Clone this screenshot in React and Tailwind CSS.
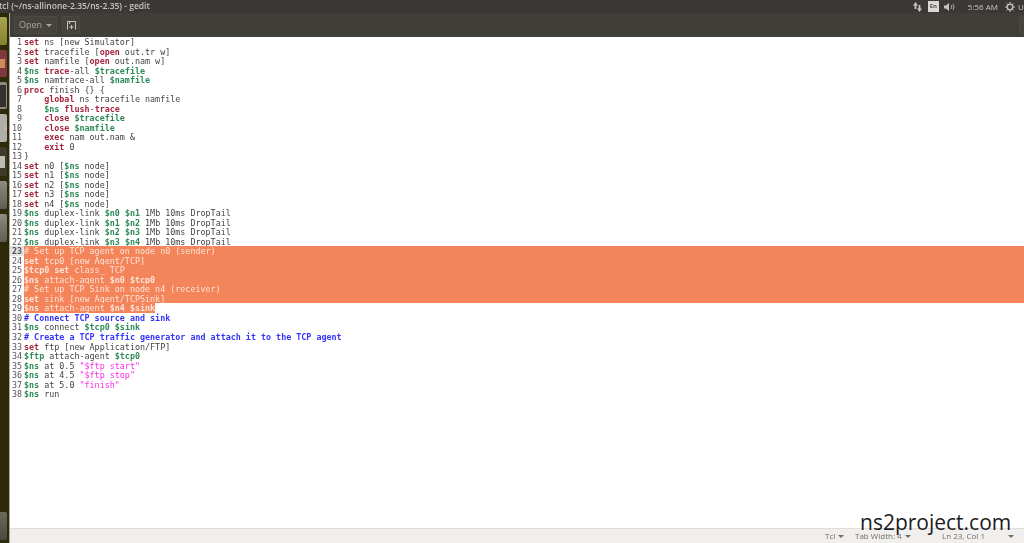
import React from "react";

const K = "k", V = "v", C = "c", S = "s", P = "p";
const lines = [
  [[K,"set"],[P," ns [new Simulator]"]],
  [[K,"set"],[P," tracefile ["],[K,"open"],[P," out.tr w]"]],
  [[K,"set"],[P," namfile ["],[K,"open"],[P," out.nam w]"]],
  [[V,"$ns"],[P," "],[K,"trace"],[P,"-all "],[V,"$tracefile"]],
  [[V,"$ns"],[P," namtrace-all "],[V,"$namfile"]],
  [[K,"proc"],[P," finish {} {"]],
  [[P,"    "],[K,"global"],[P," ns tracefile namfile"]],
  [[P,"    "],[V,"$ns"],[P," "],[K,"flush"],[P,"-"],[K,"trace"]],
  [[P,"    "],[K,"close"],[P," "],[V,"$tracefile"]],
  [[P,"    "],[K,"close"],[P," "],[V,"$namfile"]],
  [[P,"    "],[K,"exec"],[P," nam out.nam &"]],
  [[P,"    "],[K,"exit"],[P," 0"]],
  [[P,"}"]],
  [[K,"set"],[P," n0 ["],[V,"$ns"],[P," node]"]],
  [[K,"set"],[P," n1 ["],[V,"$ns"],[P," node]"]],
  [[K,"set"],[P," n2 ["],[V,"$ns"],[P," node]"]],
  [[K,"set"],[P," n3 ["],[V,"$ns"],[P," node]"]],
  [[K,"set"],[P," n4 ["],[V,"$ns"],[P," node]"]],
  [[V,"$ns"],[P," duplex-link "],[V,"$n0"],[P," "],[V,"$n1"],[P," 1Mb 10ms DropTail"]],
  [[V,"$ns"],[P," duplex-link "],[V,"$n1"],[P," "],[V,"$n2"],[P," 1Mb 10ms DropTail"]],
  [[V,"$ns"],[P," duplex-link "],[V,"$n2"],[P," "],[V,"$n3"],[P," 1Mb 10ms DropTail"]],
  [[V,"$ns"],[P," duplex-link "],[V,"$n3"],[P," "],[V,"$n4"],[P," 1Mb 10ms DropTail"]],
  [[P,"# Set up TCP agent on node n0 (sender)"]],
  [[K,"set"],[P," tcp0 [new Agent/TCP]"]],
  [[V,"$tcp0"],[P," "],[K,"set"],[P," class_ TCP"]],
  [[V,"$ns"],[P," attach-agent "],[V,"$n0"],[P," "],[V,"$tcp0"]],
  [[P,"# Set up TCP Sink on node n4 (receiver)"]],
  [[K,"set"],[P," sink [new Agent/TCPSink]"]],
  [[V,"$ns"],[P," attach-agent "],[V,"$n4"],[P," "],[V,"$sink"]],
  [[C,"# Connect TCP source and sink"]],
  [[V,"$ns"],[P," connect "],[V,"$tcp0"],[P," "],[V,"$sink"]],
  [[C,"# Create a TCP traffic generator and attach it to the TCP agent"]],
  [[K,"set"],[P," ftp [new Application/FTP]"]],
  [[V,"$ftp"],[P," attach-agent "],[V,"$tcp0"]],
  [[V,"$ns"],[P," at 0.5 "],[S,"\"$ftp start\""]],
  [[V,"$ns"],[P," at 4.5 "],[S,"\"$ftp stop\""]],
  [[V,"$ns"],[P," at 5.0 "],[S,"\"finish\""]],
  [[V,"$ns"],[P," run"]],
];

const tokenClass = {
  k: "font-bold text-[#a5263f]",
  v: "font-bold text-[#2e8b57]",
  c: "font-bold text-[#3434ff]",
  s: "text-[#ff2bea]",
  p: "text-[#444444]",
};
const selectedClass = {
  k: "font-bold text-[#fde3d7]",
  v: "font-bold text-[#fde3d7]",
  c: "text-[#fde3d7]",
  s: "text-[#fde3d7]",
  p: "text-[#fde3d7]",
};

function Code() {
  return (
    <div className="flex-1 bg-white overflow-hidden font-['DejaVu_Sans_Mono',monospace] text-[8.4px] leading-[11px] blur-[0.3px]">
      {lines.map((toks, i) => {
        const n = i + 1;
        const sel = n >= 23 && n <= 29;
        const full = n >= 23 && n <= 28;
        const map = sel ? selectedClass : tokenClass;
        return (
          <div key={n} className="flex h-[9.53px] whitespace-pre">
            <span className={`w-[14px] shrink-0 pr-[2px] text-right text-[#555555] ${n === 23 ? "font-bold bg-[#e4e4e4]" : ""}`}>{n}</span>
            <span className={full ? "flex-1 bg-[#f4845a]" : sel ? "bg-[#f4845a]" : ""}>
              {toks.map(([t, s], j) => (
                <span key={j} className={map[t]}>{s}</span>
              ))}
            </span>
          </div>
        );
      })}
    </div>
  );
}

function Launcher() {
  const icons = [
    ["h-[28px] bg-gradient-to-b from-[#a8a64c] to-[#86832f]", ""],
    ["h-[27px] bg-[#7d3a3c]", "w-[5px] h-[9px] bg-[#d08a5c]"],
    ["h-[27px] bg-[#8b8a84]", "w-[6px] h-[22px] bg-[#33322e]"],
    ["h-[28px] bg-[#b0aea8]", "w-[2px] h-[3px] bg-[#e9a7c8] ml-auto"],
    ["h-[29px] bg-[#3e3b28]", "w-[5px] h-[12px] bg-[#bdbcb3]"],
    ["h-[28px] bg-gradient-to-b from-[#8f8d82] to-[#5f5d52]", ""],
    ["h-[28px] bg-gradient-to-b from-[#8f8d82] to-[#5f5d52]", ""],
  ];
  return (
    <aside className="w-[10px] shrink-0 flex flex-col bg-[#2e2908] border-r border-[#a9a79f] pt-[4px] pb-[3px]">
      <div className="flex flex-col gap-[5px]">
        {icons.map(([c, inner], i) => (
          <div key={i} className={`w-[7px] flex items-center rounded-r-[2px] overflow-hidden ${c}`}>
            {inner && <div className={inner} />}
          </div>
        ))}
      </div>
      <div className="mt-auto h-[28px] w-[7px] rounded-r-[2px] bg-gradient-to-b from-[#6b6a5c] to-[#4a493d]" />
    </aside>
  );
}

function Caret() {
  return <span className="inline-block w-0 h-0 border-x-[3px] border-x-transparent border-t-[3px] border-t-current align-middle" />;
}

export default function App() {
  return (
    <div className="relative w-[1024px] h-[543px] overflow-hidden flex flex-col bg-white font-['Open_Sans',sans-serif]">
      <header className="h-[13px] shrink-0 flex items-center bg-[#3a3935] text-[#c8c5bd] overflow-hidden blur-[0.25px]">
        <span className="-ml-[1px] flex-1 text-[8.5px] font-semibold whitespace-pre leading-none">tcl (~/ns-allinone-2.35/ns-2.35) - gedit</span>
        <div className="flex items-center text-[#c8c5bd]">
          <svg width="9" height="10" viewBox="0 0 9 10" className="mr-[6px]" fill="currentColor">
            <path d="M2.5 0 5 3.5H3.4V7H1.6V3.5H0Z" />
            <path d="M6.5 10 4 6.5h1.6V3h1.8v3.5H9Z" />
          </svg>
          <span className="w-[11px] h-[11px] bg-[#d9d8d3] text-[#55544f] text-[6px] font-bold flex items-center justify-center mr-[5px]">En</span>
          <svg width="12" height="10" viewBox="0 0 12 10" className="mr-[12px]" fill="none" stroke="currentColor">
            <path d="M0 3.5h2L5 1v8L2 6.5H0Z" fill="currentColor" stroke="none" />
            <path d="M7 3a3 3 0 0 1 0 4M9 2a5 5 0 0 1 0 6" strokeWidth="0.8" />
          </svg>
          <span className="text-[8px] leading-none mr-[7px] whitespace-pre">5:56 AM</span>
          <svg width="10" height="10" viewBox="0 0 10 10" className="mr-[3px]" fill="none" stroke="currentColor" strokeWidth="1.3">
            <circle cx="5" cy="5" r="2.8" />
            <path d="M5 0v2M5 8v2M0 5h2M8 5h2M1.5 1.5l1.3 1.3M7.2 7.2l1.3 1.3M1.5 8.5l1.3-1.3M7.2 2.8l1.3-1.3" strokeWidth="1" />
          </svg>
          <span className="text-[8px] leading-none w-[6px] overflow-hidden">U</span>
        </div>
      </header>
      <div className="flex-1 flex min-h-0">
        <Launcher />
        <main className="flex-1 flex flex-col min-w-0">
          <div className="h-[24px] shrink-0 flex items-center gap-[5px] pl-[4px] bg-[#3f3e39] blur-[0.25px]">
            <button className="w-[43px] h-[18px] flex items-center justify-center gap-[4px] rounded-[2px] border border-[#4a4943] bg-[#44433e] text-[9px] text-[#a8a69e]">
              <span>Open</span>
              <Caret />
            </button>
            <button className="w-[18px] h-[18px] flex items-center justify-center rounded-[2px] border border-[#4a4943] bg-[#44433e] text-[#c8c5bd]">
              <svg width="9" height="9" viewBox="0 0 9 9" fill="none" stroke="currentColor" strokeWidth="1">
                <path d="M.5 8.5V.5h8v8M2.5.5v2.5M4.5 4v4M2.5 6h4" />
              </svg>
            </button>
            <div className="ml-auto w-[5px] h-[18px] rounded-l-[2px] border border-r-0 border-[#4a4943] bg-[#44433e]" />
          </div>
          <Code />
          <footer className="h-[15px] shrink-0 flex items-center bg-[#f0efee] border-t border-[#dfdedc] text-[8px] text-[#6f6e68] blur-[0.2px]">
            <div className="ml-[815px] flex items-center gap-[3px] w-[30px]"><span>Tcl</span><Caret /></div>
            <div className="flex items-center gap-[3px] w-[87px]"><span className="whitespace-pre">Tab Width: 4</span><Caret /></div>
            <span className="w-[66px] whitespace-pre">Ln 23, Col 1</span>
            <Caret />
          </footer>
        </main>
      </div>
      <div className="absolute left-[860px] top-[508px] text-[21px] leading-[28px] text-[#1c1c1c] font-['Open_Sans',sans-serif] whitespace-pre">ns2project.com</div>
    </div>
  );
}
